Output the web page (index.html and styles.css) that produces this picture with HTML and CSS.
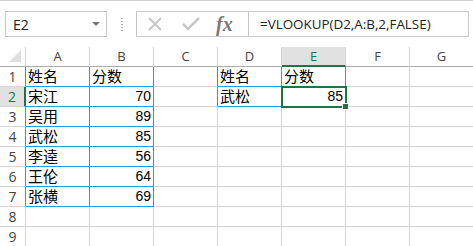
FILE: index.html
```html
<!DOCTYPE html>
<html lang="zh-CN">
<head>
    <meta charset="UTF-8">
    <title>VLOOKUP</title>
    <link rel="stylesheet" href="styles.css">
</head>
<body>
    <div class="formula-bar">
        <div class="name-box">
            <span>E2</span>
            <span class="drop"></span>
        </div>
        <div class="grip"></div>
        <div class="fn-buttons">
            <svg class="icon" width="18" height="14" viewBox="0 0 18 14">
                <path d="M3 1 L15 13 M15 1 L3 13" stroke="#c8c8c8" stroke-width="2.2" fill="none"/>
            </svg>
            <svg class="icon" width="20" height="14" viewBox="0 0 20 14">
                <path d="M2 7 L7 12 L18 1" stroke="#c8c8c8" stroke-width="2.6" fill="none"/>
            </svg>
            <span class="fx">fx</span>
        </div>
        <div class="formula">=VLOOKUP(D2,A:B,2,FALSE)</div>
    </div>

    <div class="sheet">
        <div class="corner"><span class="tri"></span></div>
        <div class="col">A</div>
        <div class="col">B</div>
        <div class="col">C</div>
        <div class="col">D</div>
        <div class="col sel">E</div>
        <div class="col">F</div>
        <div class="col">G</div>

        <div class="row br">1</div>
        <div class="cell br bb">姓名</div>
        <div class="cell br bb">分数</div>
        <div class="cell br"></div>
        <div class="cell br bb">姓名</div>
        <div class="cell br bb">分数</div>
        <div class="cell"></div>
        <div class="cell"></div>

        <div class="row sel">2</div>
        <div class="cell br bb">宋江</div>
        <div class="cell num br bb">70</div>
        <div class="cell br"></div>
        <div class="cell br bb">武松</div>
        <div class="cell num br bb active">85</div>
        <div class="cell"></div>
        <div class="cell"></div>

        <div class="row br">3</div>
        <div class="cell br bb">吴用</div>
        <div class="cell num br bb">89</div>
        <div class="cell"></div>
        <div class="cell"></div>
        <div class="cell"></div>
        <div class="cell"></div>
        <div class="cell"></div>

        <div class="row br">4</div>
        <div class="cell br bb">武松</div>
        <div class="cell num br bb">85</div>
        <div class="cell"></div>
        <div class="cell"></div>
        <div class="cell"></div>
        <div class="cell"></div>
        <div class="cell"></div>

        <div class="row br">5</div>
        <div class="cell br bb">李逵</div>
        <div class="cell num br bb">56</div>
        <div class="cell"></div>
        <div class="cell"></div>
        <div class="cell"></div>
        <div class="cell"></div>
        <div class="cell"></div>

        <div class="row br">6</div>
        <div class="cell br bb">王伦</div>
        <div class="cell num br bb">64</div>
        <div class="cell"></div>
        <div class="cell"></div>
        <div class="cell"></div>
        <div class="cell"></div>
        <div class="cell"></div>

        <div class="row br">7</div>
        <div class="cell br bb">张横</div>
        <div class="cell num br bb">69</div>
        <div class="cell"></div>
        <div class="cell"></div>
        <div class="cell"></div>
        <div class="cell"></div>
        <div class="cell"></div>

        <div class="row">8</div>
        <div class="cell"></div>
        <div class="cell"></div>
        <div class="cell"></div>
        <div class="cell"></div>
        <div class="cell"></div>
        <div class="cell"></div>
        <div class="cell"></div>

        <div class="row">9</div>
        <div class="cell"></div>
        <div class="cell"></div>
        <div class="cell"></div>
        <div class="cell"></div>
        <div class="cell"></div>
        <div class="cell"></div>
        <div class="cell"></div>
    </div>
</body>
</html>
```

FILE: styles.css
```css
body {
    margin: 0;
    background: #ffffff;
    font-family: 'Open Sans', 'Noto Sans CJK SC', sans-serif;
    overflow: hidden;
}

.formula-bar {
    height: 47px;
    box-sizing: border-box;
    border-top: 1px solid #d0d0d0;
    display: flex;
    align-items: flex-start;
    padding-top: 10px;
}

.name-box {
    margin-left: 5px;
    width: 102px;
    height: 26px;
    box-sizing: border-box;
    border: 1px solid #c6c6c6;
    display: flex;
    align-items: center;
    justify-content: space-between;
    padding: 0 6px 0 7px;
    font-size: 14px;
    color: #222;
}

.drop {
    width: 0;
    height: 0;
    border-left: 4px solid transparent;
    border-right: 4px solid transparent;
    border-top: 4px solid #777;
}

.grip {
    width: 2px;
    height: 13px;
    margin: 7px 13px 0 14px;
    background: repeating-linear-gradient(to bottom, #b0b0b0 0 1px, transparent 1px 3px);
}

.fn-buttons {
    width: 112px;
    height: 26px;
    box-sizing: border-box;
    border: 1px solid #c6c6c6;
    border-right: none;
    display: flex;
    align-items: center;
    padding-left: 9px;
    gap: 17px;
}

.fx {
    font-family: 'Liberation Serif', serif;
    font-style: italic;
    font-weight: bold;
    font-size: 20px;
    color: #7a7a7a;
    margin-left: -2px;
    line-height: 1;
}

.formula {
    width: 221px;
    height: 26px;
    box-sizing: border-box;
    border: 1px solid #c6c6c6;
    padding-left: 11px;
    font-size: 13.4px;
    line-height: 24px;
    color: #222;
    white-space: nowrap;
}

.sheet {
    display: grid;
    grid-template-columns: 26px repeat(7, 64px);
    grid-template-rows: repeat(10, 20px);
}

.sheet > div {
    box-sizing: border-box;
    border-right: 1px solid #d4d4d4;
    border-bottom: 1px solid #d4d4d4;
}

.corner {
    position: relative;
    border-bottom-color: #ababab !important;
}

.tri {
    position: absolute;
    right: 4px;
    bottom: 4px;
    width: 0;
    height: 0;
    border-left: 12px solid transparent;
    border-bottom: 12px solid #dfdfdf;
}

.col {
    text-align: center;
    font-size: 13px;
    line-height: 19px;
    color: #444;
    border-bottom-color: #ababab !important;
}

.col.sel {
    background: #e1e1e1;
    color: #217346;
    border-bottom: 2px solid #217346 !important;
    line-height: 18px;
}

.row {
    text-align: center;
    font-size: 14px;
    line-height: 19px;
    color: #444;
}

.row.sel {
    background: #e1e1e1;
    color: #217346;
    border-right: 2px solid #217346 !important;
}

.cell {
    font-size: 15px;
    line-height: 19px;
    padding: 0 2px;
    color: #000;
    white-space: nowrap;
}

.cell.num {
    text-align: right;
    font-family: 'Liberation Sans', sans-serif;
    font-size: 14px;
}

.sheet > .br {
    border-right-color: #2e9bd6;
}

.sheet > .bb {
    border-bottom-color: #2e9bd6;
}

.active {
    position: relative;
    z-index: 1;
}

.active::before {
    content: "";
    position: absolute;
    top: -1px;
    left: -1px;
    right: -2px;
    bottom: -2px;
    border: 2px solid #217346;
}

.active::after {
    content: "";
    position: absolute;
    right: -4px;
    bottom: -4px;
    width: 5px;
    height: 5px;
    background: #217346;
    border: 1px solid #fff;
}
```
